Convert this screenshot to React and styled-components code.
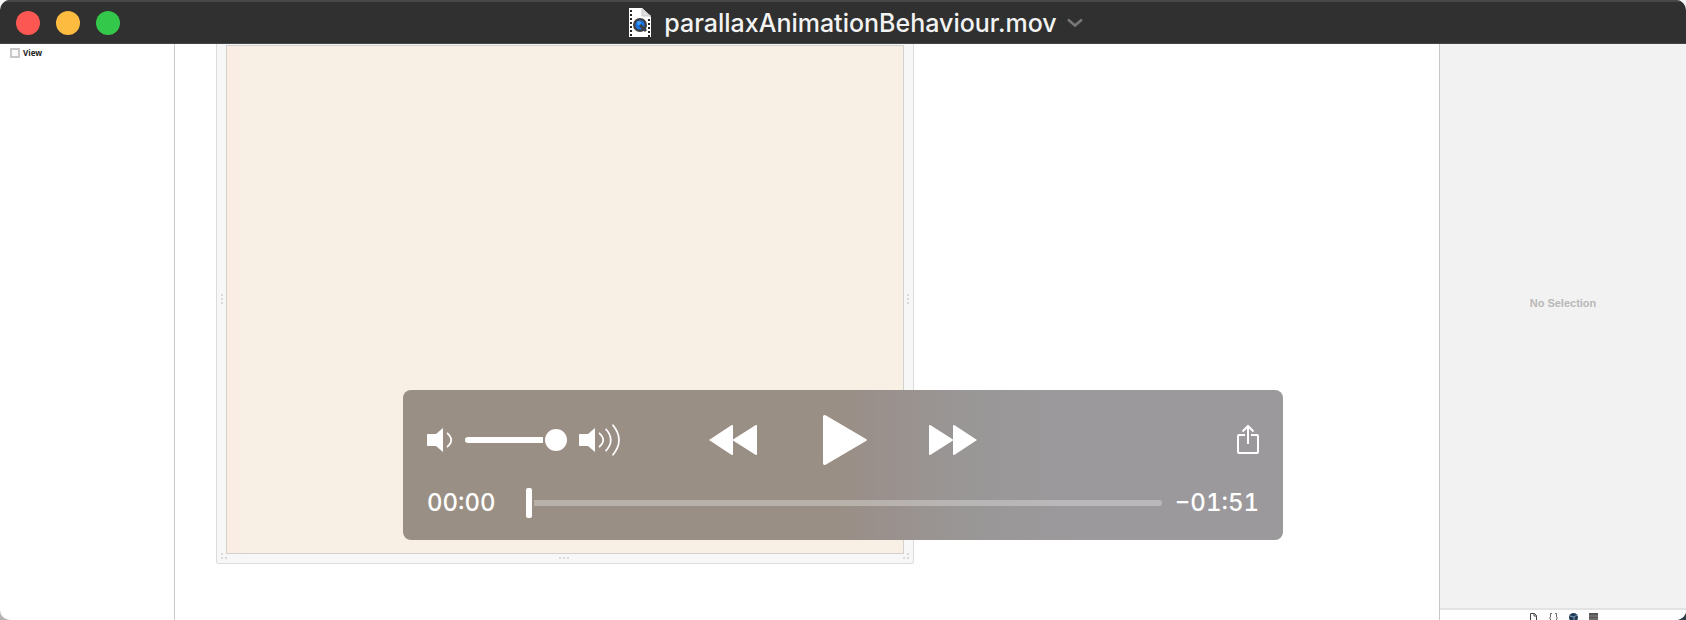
import React from "react";
import styled, { createGlobalStyle } from "styled-components";

const GlobalStyle = createGlobalStyle`
  *, *::before, *::after { box-sizing: border-box; }
  body {
    margin: 0;
    font-family: Inter, "Liberation Sans", sans-serif;
    background: linear-gradient(to bottom, transparent 50%, #b4b4b4 50%) left / 50% 100% no-repeat,
      linear-gradient(to bottom, #f4f4f4 50%, #2f3d47 50%);
  }
`;

const PlayerWindow = styled.div`
  position: relative;
  display: flex;
  flex-direction: column;
  min-height: 100vh;
  overflow: hidden;
  border-radius: 10px;
  background: #fff;
`;

const TitleBar = styled.header`
  display: grid;
  grid-template-columns: 1fr auto 1fr;
  align-items: center;
  height: 44px;
  padding: 0 16px;
  background: #2f302f;
  border-top: 2px solid #464747;
  border-bottom: 1px solid #454545;
`;

const WindowButtons = styled.div`
  display: flex;
  gap: 16px;
`;

const BareButton = styled.button`
  display: flex;
  align-items: center;
  justify-content: center;
  padding: 0;
  border: 0;
  background: none;
  color: inherit;
`;

const WindowButton = styled(BareButton)`
  width: 24px;
  height: 24px;
  border-radius: 50%;
  background: ${(p) => p.$color};
`;

const FileTitle = styled.h1`
  display: flex;
  align-items: center;
  gap: 13px;
  margin: 0;
  font-size: 25px;
  line-height: 32px;
  font-weight: 500;
  color: #f3f3f3;
  white-space: nowrap;
`;

const TitleMenuButton = styled(BareButton)`
  width: 16px;
  height: 24px;
  margin-left: 10px;
  color: #777;
`;

const Video = styled.main`
  display: grid;
  grid-template-columns: 175px minmax(0, 1fr) 247px;
  flex: 1;
`;

const Outline = styled.aside`
  padding: 4px 10px;
  border-right: 1px solid #c9c9c9;
`;

const OutlineItem = styled.div`
  display: flex;
  align-items: center;
  gap: 3px;
  font: 700 8px/10px "Open Sans", sans-serif;
  color: #222;
`;

const ViewSwatch = styled.span`
  width: 10px;
  height: 10px;
  border: 2px solid #c8c8c8;
  background: #fafafa;
`;

const Stage = styled.section`
  display: grid;
  grid-template-columns: 698fr 525fr;
  padding: 0 0 56px 41px;
`;

const Frame = styled.div`
  position: relative;
  display: flex;
  padding: 1px 9px 9px;
  border: 1px solid #dcdcdc;
  border-top: 0;
  border-radius: 0 0 3px 3px;
  background: #f7f7f7;
`;

const Artboard = styled.div`
  flex: 1;
  border: 1px solid #d3d1cd;
  background: linear-gradient(to right, #fcece3, #f8f0e5 20px);
`;

const Grip = styled.svg`
  position: absolute;
  display: block;
  fill: #d0d0d0;
  ${(p) =>
    ({
      left: "left: 3px; top: 48%;",
      right: "right: 3px; top: 48%;",
      bottom: "left: 49%; bottom: 3px;",
      bottomLeft: "left: 3px; bottom: 3px;",
      bottomRight: "right: 3px; bottom: 3px; transform: scaleX(-1);",
    })[p.$side]}
`;

const Inspector = styled.aside`
  display: flex;
  flex-direction: column;
  border-left: 1px solid #c6c6c6;
  background: #f2f2f2;
`;

const EmptyNote = styled.p`
  display: flex;
  flex: 1;
  align-items: center;
  justify-content: center;
  margin: 0;
  padding-bottom: 46px;
  font: 700 11px/16px "Liberation Sans", sans-serif;
  color: #b8b8b8;
`;

const LibraryBar = styled.nav`
  display: flex;
  justify-content: center;
  align-items: flex-start;
  height: 12px;
  padding-top: 3px;
  overflow: hidden;
  border-top: 2px solid #e3e3e3;
  background: #fff;
`;

const LibraryButton = styled(BareButton)`
  width: 20px;
  height: 10px;
`;

const Controller = styled.section`
  position: absolute;
  left: 0;
  right: 0;
  bottom: 80px;
  display: flex;
  flex-direction: column;
  gap: 23px;
  width: min(880px, 100%);
  margin: 0 auto;
  padding: 25px 24px 22px;
  border-radius: 8px;
  color: #fff;
  background: linear-gradient(to right, #9a8f85 49%, #9a908c 54%, #999695 63%, #9a9899 69%, #9c999c 76%);
`;

const ControlRow = styled.div`
  display: grid;
  grid-template-columns: 1fr auto 1fr;
  align-items: center;
`;

const VolumeGroup = styled.div`
  display: flex;
  align-items: center;
  gap: 12px;
`;

const Transport = styled.div`
  display: flex;
  align-items: center;
  gap: 62px;
`;

const ShareButton = styled(BareButton)`
  justify-self: end;
`;

const Slider = styled.input`
  appearance: none;
  display: block;
  min-width: 0;
  height: 30px;
  margin: 0;
  background: none;

  &::-webkit-slider-runnable-track {
    height: 6px;
    border-radius: 3px;
  }
  &::-webkit-slider-thumb {
    appearance: none;
    background: #fff;
  }
`;

const VolumeSlider = styled(Slider)`
  width: 102px;

  &::-webkit-slider-runnable-track {
    background: linear-gradient(#fff, #fff) left / calc(100% - 24px) 100% no-repeat;
  }
  &::-webkit-slider-thumb {
    width: 22px;
    height: 22px;
    margin-top: -8px;
    border-radius: 50%;
  }
`;

const Scrubber = styled(Slider)`
  flex: 1;

  &::-webkit-slider-runnable-track {
    background: linear-gradient(to right, transparent 8px, rgba(255, 255, 255, 0.3) 8px);
  }
  &::-webkit-slider-thumb {
    width: 6px;
    height: 30px;
    margin-top: -12px;
    border-radius: 2px;
  }
`;

const TimeRow = styled.div`
  display: flex;
  align-items: center;
`;

const Time = styled.time`
  flex: none;
  width: ${(p) => p.$width}px;
  font-size: 24px;
  line-height: 30px;
  font-weight: 500;
  font-variant-numeric: tabular-nums;
  white-space: nowrap;
  text-align: ${(p) => p.$align || "left"};
`;

const Icon = styled.svg`
  display: block;
  flex: none;
`;

function MovieFileIcon() {
  return (
    <Icon width="22" height="30" viewBox="0 0 22 30" aria-hidden="true">
      <path d="M0 0h13l9 9v20H0z" fill="#fff" />
      <path d="M13 0v8h9z" fill="#dedede" />
      <path d="M13 0v8h9" fill="none" stroke="#ccc" />
      <path d="M2 2v27M20 11v18" stroke="#242424" strokeWidth="2" strokeDasharray="2 2" />
      <circle cx="11" cy="17" r="7" fill="#3d4147" />
      <circle cx="11" cy="17" r="4.5" fill="#1674e6" />
      <circle cx="10" cy="15" r="2" fill="#3f9af4" />
      <path d="M11 17l6 6" stroke="#3d4147" strokeWidth="3" />
    </Icon>
  );
}

function SpeakerIcon({ loud }) {
  return (
    <Icon width={loud ? 42 : 26} height="32" viewBox={loud ? "0 0 42 32" : "0 0 26 32"} aria-hidden="true">
      <path d="M1 10h8l7-6v24l-7-6H1q-1 0-1-1V11q0-1 1-1z" fill="currentColor" />
      <g fill="none" stroke="currentColor" strokeWidth="1.7" strokeLinecap="round">
        <path d="M20.5 9.3Q28 16 20.5 22.7" />
        {loud && <path d="M27 5.3Q36.5 16 27 26.7M34 1.2Q46 16 34 30.8" />}
      </g>
    </Icon>
  );
}

function SkipIcon({ back }) {
  return (
    <Icon width="48" height="30" viewBox="0 0 48 30" aria-hidden="true">
      <path
        d={
          back
            ? "M0 15L22 .5Q24-.5 24 1v13.5L46 .5Q48-.5 48 1v28q0 1.5-2 .5L24 15.5V29q0 1.5-2 .5z"
            : "M48 15L26 .5Q24-.5 24 1v13.5L2 .5Q0-.5 0 1v28q0 1.5 2 .5L24 15.5V29q0 1.5 2 .5z"
        }
        fill="currentColor"
      />
    </Icon>
  );
}

const Dots = ({ side }) => {
  const points = {
    left: [[2, 2], [2, 6], [2, 10]],
    right: [[2, 2], [2, 6], [2, 10]],
    bottom: [[2, 2], [6, 2], [10, 2]],
    bottomLeft: [[2, 2], [2, 6], [6, 6]],
    bottomRight: [[2, 2], [2, 6], [6, 6]],
  }[side];
  const size = {
    left: [4, 12],
    right: [4, 12],
    bottom: [12, 4],
    bottomLeft: [8, 8],
    bottomRight: [8, 8],
  }[side];
  return (
    <Grip $side={side} width={size[0]} height={size[1]} aria-hidden="true">
      {points.map(([x, y]) => (
        <circle key={`${x}-${y}`} cx={x} cy={y} r="1" />
      ))}
    </Grip>
  );
};

const windowButtons = [
  ["Close", "#fc5753"],
  ["Minimize", "#fdbc40"],
  ["Zoom", "#34c84a"],
];

const libraryIcons = [
  ["File templates", <path d="M1.5 .5h4l2 2v7h-6zM5 .5v2.5h2.5" fill="none" stroke="#444" />],
  ["Code snippets", <path d="M3 .5H1.500V4L.5 5l1 1v4M6 .5h1.500V4l1 1-1 1v4" fill="none" stroke="#666" />],
  ["Objects", <g><circle cx="4.500" cy="4.500" r="4.500" fill="#203c57" /><path d="M1 3l4 1 3-2M5 4v5" stroke="#7f9bb1" fill="none" /></g>],
  ["Media", <g><path d="M0 0h9v10H0z" fill="#555" /><path d="M0 3h9M0 6h9" stroke="#888" /></g>],
];

export default function App() {
  return (
    <>
      <GlobalStyle />
      <PlayerWindow>
        <TitleBar>
          <WindowButtons>
            {windowButtons.map(([name, color]) => (
              <WindowButton key={name} type="button" aria-label={name} $color={color} />
            ))}
          </WindowButtons>
          <FileTitle>
            <MovieFileIcon />
            parallaxAnimationBehaviour.mov
          </FileTitle>
          <TitleMenuButton type="button" aria-label="Document options">
            <Icon width="16" height="10" viewBox="0 0 16 10" fill="none" stroke="currentColor" strokeWidth="2.500">
              <path d="M1 1.500l7 6 7-6" />
            </Icon>
          </TitleMenuButton>
        </TitleBar>

        <Video>
          <Outline>
            <OutlineItem>
              <ViewSwatch />
              View
            </OutlineItem>
          </Outline>
          <Stage>
            <Frame>
              <Artboard />
              {["left", "right", "bottom", "bottomLeft", "bottomRight"].map((side) => (
                <Dots key={side} side={side} />
              ))}
            </Frame>
          </Stage>
          <Inspector>
            <EmptyNote>No Selection</EmptyNote>
            <LibraryBar aria-label="Library">
              {libraryIcons.map(([name, art]) => (
                <LibraryButton key={name} type="button" aria-label={name}>
                  <Icon width="9" height="10" viewBox="0 0 9 10">{art}</Icon>
                </LibraryButton>
              ))}
            </LibraryBar>
          </Inspector>
        </Video>

        <Controller aria-label="Playback controls">
          <ControlRow>
            <VolumeGroup>
              <BareButton type="button" aria-label="Mute"><SpeakerIcon /></BareButton>
              <VolumeSlider type="range" min="0" max="100" defaultValue="100" aria-label="Volume" />
              <BareButton type="button" aria-label="Full volume"><SpeakerIcon loud /></BareButton>
            </VolumeGroup>
            <Transport>
              <BareButton type="button" aria-label="Rewind"><SkipIcon back /></BareButton>
              <BareButton type="button" aria-label="Play">
                <Icon width="48" height="50" viewBox="0 0 48 50">
                  <path d="M4 2q0-3 3-1.500L47 24q2 1 0 2L7 49.500Q4 51 4 48z" fill="currentColor" />
                </Icon>
              </BareButton>
              <BareButton type="button" aria-label="Fast forward"><SkipIcon /></BareButton>
            </Transport>
            <ShareButton type="button" aria-label="Share">
              <Icon width="22" height="34" viewBox="0 0 22 34" fill="none" stroke="currentColor" strokeWidth="2">
                <path d="M8 12H2q-1 0-1 1v16q0 1 1 1h18q1 0 1-1V13q0-1-1-1h-6" />
                <path d="M11 21V3M5.500 8.500L11 3l5.500 5.500" />
              </Icon>
            </ShareButton>
          </ControlRow>
          <TimeRow>
            <Time $width={99}>00:00</Time>
            <Scrubber type="range" min="0" max="111" defaultValue="0" aria-label="Position" />
            <Time $width={97} $align="right">−01:51</Time>
          </TimeRow>
        </Controller>
      </PlayerWindow>
    </>
  );
}
